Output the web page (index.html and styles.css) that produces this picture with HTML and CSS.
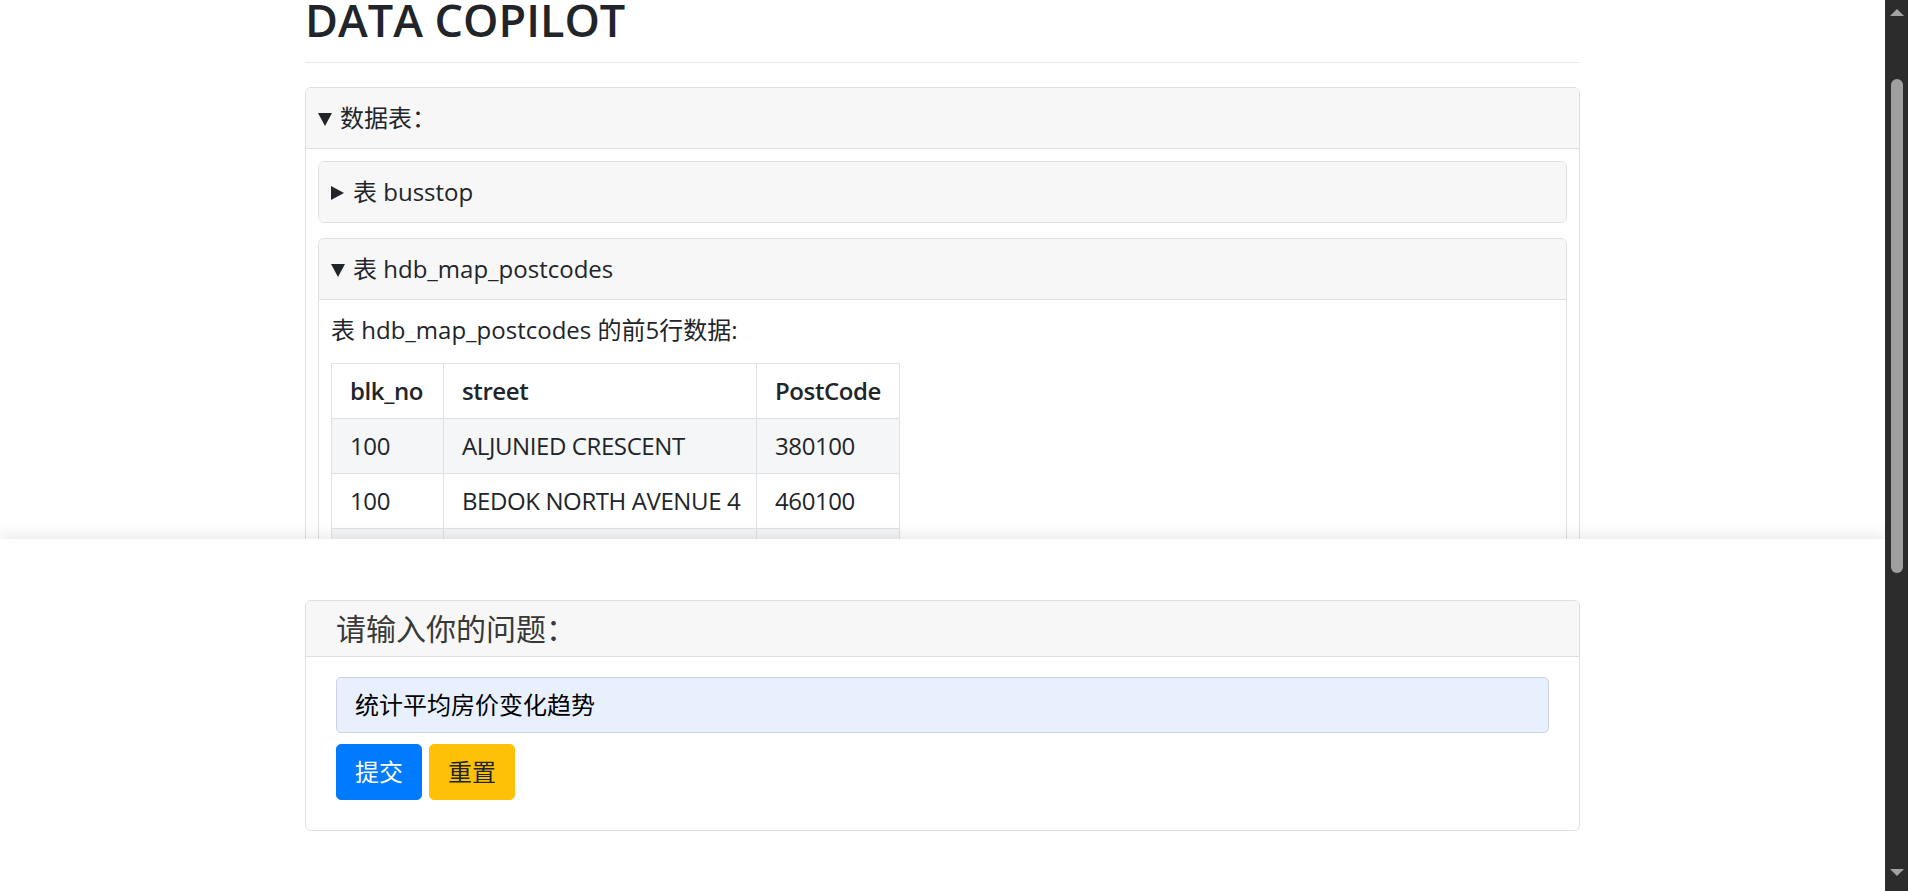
FILE: index.html
```html
<!DOCTYPE html>
<html lang="zh-CN">
<head>
<meta charset="utf-8">
<title>DATA COPILOT</title>
<link rel="stylesheet" href="styles.css">
</head>
<body>
<div class="viewport">
  <div class="page">
    <div class="container">
      <h1 class="title">DATA COPILOT</h1>
      <hr class="rule">
      <details class="card" open>
        <summary class="card-header">数据表：</summary>
        <div class="card-body">
          <details class="card inner">
            <summary class="card-header">表 busstop</summary>
          </details>
          <details class="card inner" open>
            <summary class="card-header">表 hdb_map_postcodes</summary>
            <div class="card-body">
              <p class="caption">表 hdb_map_postcodes 的前5行数据:</p>
              <table class="data-table">
                <colgroup><col class="c1"><col class="c2"><col class="c3"></colgroup>
                <thead>
                  <tr><th>blk_no</th><th>street</th><th>PostCode</th></tr>
                </thead>
                <tbody>
                  <tr><td>100</td><td>ALJUNIED CRESCENT</td><td>380100</td></tr>
                  <tr><td>100</td><td>BEDOK NORTH AVENUE 4</td><td>460100</td></tr>
                  <tr><td>100</td><td>BUKIT BATOK ST 11</td><td>650100</td></tr>
                </tbody>
              </table>
            </div>
          </details>
        </div>
      </details>
    </div>
  </div>

  <div class="ask-panel">
    <div class="container">
      <div class="card ask-card">
        <div class="ask-header">请输入你的问题：</div>
        <div class="ask-body">
          <input class="ask-input" type="text" value="统计平均房价变化趋势">
          <div class="actions">
            <button class="btn btn-primary" type="button">提交</button>
            <button class="btn btn-warning" type="button">重置</button>
          </div>
        </div>
      </div>
    </div>
  </div>
</div>

<div class="scrollbar">
  <svg class="sb-arrow sb-up" width="14" height="7" viewBox="0 0 14 7"><path d="M7 0 L14 7 L0 7 Z" fill="#a3a3a3"/></svg>
  <div class="sb-thumb"></div>
  <div class="sb-track"></div>
  <svg class="sb-arrow sb-down" width="14" height="7" viewBox="0 0 14 7"><path d="M0 0 L14 0 L7 7 Z" fill="#a3a3a3"/></svg>
</div>
</body>
</html>
```

FILE: styles.css
```css
html, body {
  margin: 0;
  height: 100%;
  overflow: hidden;
}

body {
  display: flex;
  font-family: "Open Sans", "Noto Sans CJK SC", sans-serif;
  font-size: 24px;
  line-height: 1.5;
  color: #212529;
  background: #fff;
}

.viewport {
  flex: 1;
  position: relative;
  overflow: hidden;
}

.container {
  width: 1275px;
  margin: 0 auto;
}

.title {
  font-size: 45px;
  font-weight: 600;
  line-height: 54px;
  margin: -7px 0 0;
}

.rule {
  border: 0;
  border-top: 1px solid #e9e9e9;
  margin: 15px 0 24px;
}

.card {
  border: 1px solid #dfdfdf;
  border-radius: 6px;
  background: #fff;
}

.card-header {
  display: flex;
  align-items: center;
  list-style: none;
  padding: 12px;
  line-height: 36px;
  background: #f7f7f7;
  border-bottom: 1px solid #dfdfdf;
  border-radius: 5px 5px 0 0;
  cursor: pointer;
}

.card-header::-webkit-details-marker {
  display: none;
}

.card-header::before {
  content: "";
  flex: none;
  width: 0;
  height: 0;
  margin: 3px 8px 0 0;
  border-left: 7.5px solid transparent;
  border-right: 7.5px solid transparent;
  border-top: 13px solid #212529;
}

details:not([open]) > .card-header {
  border-bottom: 0;
  border-radius: 5px;
}

details:not([open]) > .card-header::before {
  margin: 2px 9px 0 0;
  border-top: 7.5px solid transparent;
  border-bottom: 7.5px solid transparent;
  border-left: 13px solid #212529;
  border-right: 0;
}

.card-body {
  padding: 12px;
}

.inner {
  margin-bottom: 15px;
}

.caption {
  margin: 0 0 15px;
  line-height: 36px;
}

.data-table {
  border-collapse: collapse;
  table-layout: fixed;
  width: 568px;
}

.c1 { width: 112px; }
.c2 { width: 313px; }
.c3 { width: 143px; }

.data-table th,
.data-table td {
  border: 1px solid #dee2e6;
  padding: 9px 18px;
  line-height: 36px;
  text-align: left;
  white-space: nowrap;
  letter-spacing: -0.4px;
}

.data-table th {
  font-weight: 600;
}

.data-table tbody tr:nth-child(odd) {
  background: #f5f6f8;
}

.ask-panel {
  position: absolute;
  left: 0;
  right: 0;
  bottom: 0;
  height: 352px;
  box-sizing: border-box;
  padding-top: 61px;
  background: #fff;
  box-shadow: 0 -4px 14px rgba(0, 0, 0, 0.09);
}

.ask-header {
  padding: 11px 30px;
  font-size: 30px;
  line-height: 33px;
  color: #383838;
  background: #f7f7f7;
  border-bottom: 1px solid #dfdfdf;
  border-radius: 5px 5px 0 0;
}

.ask-body {
  padding: 20px 30px 30px;
}

.ask-input {
  display: block;
  width: 100%;
  box-sizing: border-box;
  padding: 9px 18px;
  font: inherit;
  line-height: 36px;
  color: #000;
  background: #e8f0fe;
  border: 1px solid #cbd3de;
  border-radius: 5px;
  outline: none;
}

.actions {
  display: flex;
  gap: 7px;
  margin-top: 11px;
}

.btn {
  padding: 9px 18px;
  font: inherit;
  line-height: 36px;
  border: 1px solid transparent;
  border-radius: 5px;
  cursor: pointer;
}

.btn-primary {
  color: #fff;
  background: #007bff;
  border-color: #007bff;
}

.btn-warning {
  color: #212529;
  background: #ffc107;
  border-color: #ffc107;
}

.scrollbar {
  width: 23px;
  flex: none;
  display: flex;
  flex-direction: column;
  align-items: center;
  background: #2c2c2c;
}

.sb-up {
  margin-top: 9px;
}

.sb-thumb {
  margin-top: 63px;
  width: 12px;
  height: 494px;
  border-radius: 6px;
  background: #9f9f9f;
}

.sb-track {
  flex: 1;
}

.sb-down {
  margin-bottom: 15px;
}
```
